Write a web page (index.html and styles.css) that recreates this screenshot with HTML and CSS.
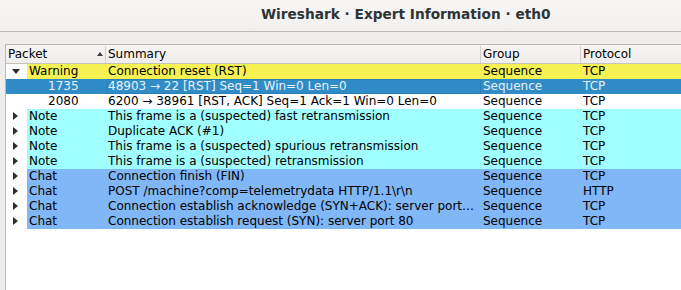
FILE: index.html
```html
<!DOCTYPE html>
<html>
<head>
<meta charset="utf-8">
<link rel="stylesheet" href="styles.css">
</head>
<body>
<div class="titlebar"><span class="title">Wireshark · Expert Information · eth0</span></div>
<div class="content">
  <div class="tree">
    <div class="row header">
      <div class="cell c1">Packet<span class="sort"></span></div>
      <div class="cell c2">Summary</div>
      <div class="cell c3">Group</div>
      <div class="cell c4">Protocol</div>
    </div>

    <div class="row group warn">
      <div class="cell c1"><span class="exp open"></span><span class="lab">Warning</span></div>
      <div class="cell c2">Connection reset (RST)</div>
      <div class="cell c3">Sequence</div>
      <div class="cell c4">TCP</div>
    </div>
    <div class="row child selected">
      <div class="cell c1">1735</div>
      <div class="cell c2 focus">48903 → 22 [RST] Seq=1 Win=0 Len=0</div>
      <div class="cell c3">Sequence</div>
      <div class="cell c4">TCP</div>
    </div>
    <div class="row child">
      <div class="cell c1">2080</div>
      <div class="cell c2">6200 → 38961 [RST, ACK] Seq=1 Ack=1 Win=0 Len=0</div>
      <div class="cell c3">Sequence</div>
      <div class="cell c4">TCP</div>
    </div>

    <div class="row group note">
      <div class="cell c1"><span class="exp"></span><span class="lab">Note</span></div>
      <div class="cell c2">This frame is a (suspected) fast retransmission</div>
      <div class="cell c3">Sequence</div>
      <div class="cell c4">TCP</div>
    </div>
    <div class="row group note">
      <div class="cell c1"><span class="exp"></span><span class="lab">Note</span></div>
      <div class="cell c2">Duplicate ACK (#1)</div>
      <div class="cell c3">Sequence</div>
      <div class="cell c4">TCP</div>
    </div>
    <div class="row group note">
      <div class="cell c1"><span class="exp"></span><span class="lab">Note</span></div>
      <div class="cell c2">This frame is a (suspected) spurious retransmission</div>
      <div class="cell c3">Sequence</div>
      <div class="cell c4">TCP</div>
    </div>
    <div class="row group note">
      <div class="cell c1"><span class="exp"></span><span class="lab">Note</span></div>
      <div class="cell c2">This frame is a (suspected) retransmission</div>
      <div class="cell c3">Sequence</div>
      <div class="cell c4">TCP</div>
    </div>

    <div class="row group chat">
      <div class="cell c1"><span class="exp"></span><span class="lab">Chat</span></div>
      <div class="cell c2">Connection finish (FIN)</div>
      <div class="cell c3">Sequence</div>
      <div class="cell c4">TCP</div>
    </div>
    <div class="row group chat">
      <div class="cell c1"><span class="exp"></span><span class="lab">Chat</span></div>
      <div class="cell c2">POST /machine?comp=telemetrydata HTTP/1.1\r\n</div>
      <div class="cell c3">Sequence</div>
      <div class="cell c4">HTTP</div>
    </div>
    <div class="row group chat">
      <div class="cell c1"><span class="exp"></span><span class="lab">Chat</span></div>
      <div class="cell c2">Connection establish acknowledge (SYN+ACK): server port…</div>
      <div class="cell c3">Sequence</div>
      <div class="cell c4">TCP</div>
    </div>
    <div class="row group chat">
      <div class="cell c1"><span class="exp"></span><span class="lab">Chat</span></div>
      <div class="cell c2">Connection establish request (SYN): server port 80</div>
      <div class="cell c3">Sequence</div>
      <div class="cell c4">TCP</div>
    </div>
  </div>
</div>
</body>
</html>
```
FILE: styles.css
```css
html, body {
  margin: 0;
  padding: 0;
  overflow: hidden;
  width: 681px;
  height: 290px;
  background: #efedeb;
  font-family: "DejaVu Sans", sans-serif;
  font-size: 12px;
  color: #000;
}

.titlebar {
  border-bottom: 1px solid #bdbab5;
  background: linear-gradient(#f7f6f5, #f2f1f0);
  display: flex;
  align-items: center;
  padding-left: 261px;
  padding-bottom: 3px;
  box-sizing: border-box;
  height: 32px;
}

.title {
  font-weight: bold;
  font-size: 13.7px;
  color: #2e3436;
  white-space: nowrap;
}

.content {
  padding: 12px 0 0 5px;
}

.tree {
  width: 720px;
  height: 260px;
  border: 1px solid #bcb9b4;
  background: #fff;
}

.row {
  display: grid;
  grid-template-columns: 100px 375px 100px 1fr;
  height: 15px;
  line-height: 15px;
  white-space: nowrap;
}

.cell {
  padding-left: 2px;
  overflow: hidden;
}

.row.header {
  line-height: 17px;
  padding-top: 1px;
  box-sizing: border-box;
  background: linear-gradient(#f6f5f4, #efeeec);
  border-bottom: 1px solid #c6c3bf;
  height: 19px;
}

.header .cell {
  border-right: 1px solid #d3d0cc;
  display: flex;
  align-items: center;
}

.header .c1 {
  justify-content: space-between;
}

.sort {
  width: 0;
  height: 0;
  border-left: 3.5px solid transparent;
  border-right: 3.5px solid transparent;
  border-bottom: 4px solid #3a3a3a;
  margin-right: 2px;
  margin-top: -1px;
}

.group .c1 {
  padding-left: 0;
  display: flex;
  background: #fff;
}

.exp {
  width: 21px;
  flex: none;
  position: relative;
}

.exp::before {
  content: "";
  position: absolute;
  left: 7px;
  top: 3px;
  border-top: 4.5px solid transparent;
  border-bottom: 4.5px solid transparent;
  border-left: 5px solid #2e2e2e;
}

.exp.open::before {
  left: 6px;
  top: 5px;
  border-left: 4.5px solid transparent;
  border-right: 4.5px solid transparent;
  border-top: 5px solid #2e2e2e;
  border-bottom: 0;
}

.lab {
  flex: 1;
  padding-left: 2px;
}

.warn .lab, .warn .c2, .warn .c3, .warn .c4 { background: #f7f253; }
.note .lab, .note .c2, .note .c3, .note .c4 { background: #a0ffff; }
.chat .lab, .chat .c2, .chat .c3, .chat .c4 { background: #80b7f7; }

.child .c1 {
  padding-left: 42px;
}

.selected {
  background: #308cc6;
  color: #e9f1f9;
}

.focus {
  box-shadow: inset 0 0 0 1px #2a7db5;
}
```
